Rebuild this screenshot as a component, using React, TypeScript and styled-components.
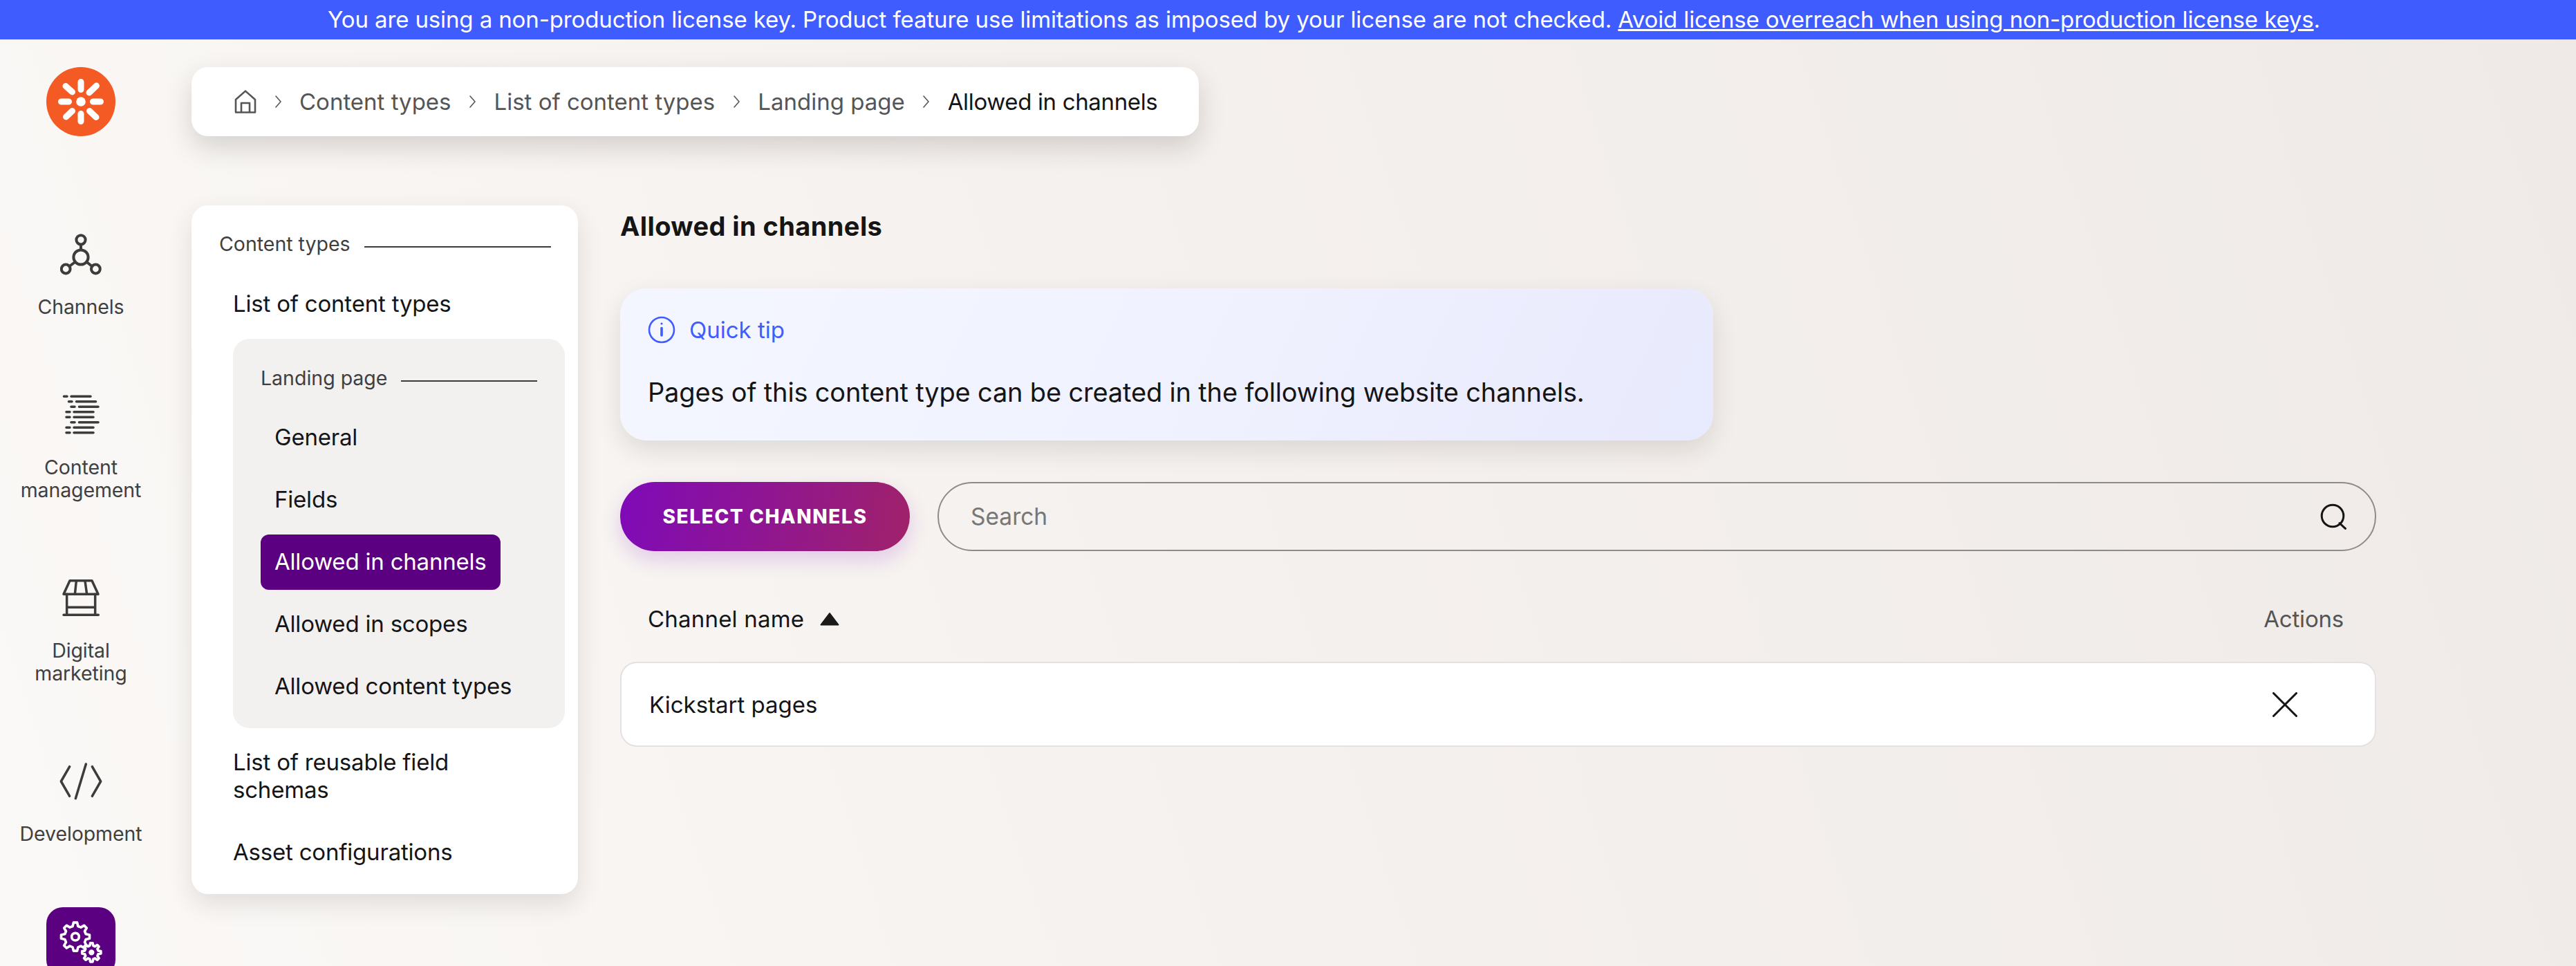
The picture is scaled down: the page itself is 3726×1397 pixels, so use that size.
import React from "react";
import styled, { createGlobalStyle } from "styled-components";

const GlobalStyle = createGlobalStyle`
  html, body {
    margin: 0;
    padding: 0;
  }
  body {
    font-family: Inter, "Liberation Sans", sans-serif;
    color: #151515;
  }
  * {
    box-sizing: border-box;
  }
`;

const Page = styled.div`
  width: 3726px;
  height: 1397px;
  overflow: hidden;
  display: flex;
  flex-direction: column;
  background: linear-gradient(72deg, #fbf9f7 0%, #f5f1ee 45%, #efeae7 100%);
`;

const Banner = styled.div`
  height: 57px;
  flex: none;
  padding-left: 104px;
  background: #3f5cff;
  color: #fff;
  font-size: 33px;
  letter-spacing: -0.12px;
  line-height: 57px;
  text-align: center;
  a {
    color: inherit;
    text-decoration: underline;
  }
`;

const Body = styled.div`
  flex: 1;
  display: flex;
`;

const Sidebar = styled.aside`
  width: 234px;
  flex: none;
  display: flex;
  flex-direction: column;
  align-items: center;
  padding-top: 40px;
  color: #404040;
`;

const Logo = styled.svg`
  width: 100px;
  height: 100px;
  flex: none;
  margin-bottom: 121px;
`;

const NavList = styled.nav`
  display: flex;
  flex-direction: column;
  align-items: center;
  gap: 90px;
`;

const NavItem = styled.div`
  display: flex;
  flex-direction: column;
  align-items: center;
`;

const NavIcon = styled.div<{ $active?: boolean }>`
  width: 100px;
  height: 100px;
  flex: none;
  display: flex;
  align-items: center;
  justify-content: center;
  border-radius: 24px;
  background: ${(p) => (p.$active ? "#5b0080" : "transparent")};
  color: ${(p) => (p.$active ? "#fff" : "#3c3c3c")};
`;

const NavLabel = styled.div`
  margin-top: 9px;
  font-size: 28.5px;
  letter-spacing: -0.1px;
  line-height: 33px;
  text-align: center;
  white-space: pre-line;
`;

const Content = styled.main`
  flex: 1;
  padding: 40px 0 0 43px;
  display: flex;
  flex-direction: column;
`;

const Breadcrumb = styled.div`
  align-self: flex-start;
  height: 100px;
  display: flex;
  align-items: center;
  gap: 26.5px;
  padding: 0 60px 0 62px;
  background: #fff;
  border-radius: 24px;
  box-shadow: 0 16px 38px rgba(40, 30, 25, 0.17);
  font-size: 33px;
  color: #555;
`;

const Current = styled.span`
  color: #151515;
  letter-spacing: -0.35px;
`;

const Columns = styled.div`
  margin-top: 100px;
  display: flex;
  align-items: flex-start;
  gap: 61px;
`;

const Menu = styled.div`
  width: 559px;
  flex: none;
  padding: 39px 19px 20px 40px;
  background: #fff;
  border-radius: 24px;
  box-shadow: 0 14px 36px rgba(40, 30, 25, 0.12);
`;

const GroupTitle = styled.div`
  display: flex;
  align-items: center;
  gap: 20px;
  margin: 0 20px 30px 0;
  font-size: 28.5px;
  line-height: 34px;
  color: #404040;
  &::after {
    content: "";
    flex: 1;
    height: 2px;
    margin-top: 8px;
    background: #3c3c3c;
  }
`;

const MenuItems = styled.div`
  display: flex;
  flex-direction: column;
  align-items: flex-start;
  gap: 10px;
`;

const MenuItem = styled.div<{ $active?: boolean }>`
  padding: 19px 20px 21px;
  font-size: 33px;
  letter-spacing: -0.2px;
  line-height: 40px;
  border-radius: 12px;
  color: ${(p) => (p.$active ? "#fff" : "#151515")};
  background: ${(p) => (p.$active ? "#5b0080" : "transparent")};
`;

const Nested = styled.div`
  width: 480px;
  margin-left: 20px;
  padding: 40px 40px 20px 40px;
  background: #f3f0f0;
  border-radius: 24px;
`;

const NestedTitle = styled(GroupTitle)`
  margin: 0 0 29px;
`;

const Panel = styled.section`
  width: 2540px;
  flex: none;
`;

const Heading = styled.h1`
  margin: 0;
  font-size: 38px;
  line-height: 60px;
  font-weight: 700;
  letter-spacing: 0.4px;
`;

const Tip = styled.div`
  width: 1581px;
  margin-top: 60px;
  height: 220px;
  padding: 40px;
  border-radius: 38px;
  background: linear-gradient(115deg, #f4f6ff 0%, #f0f2ff 50%, #e8eafd 100%);
  box-shadow: 0 14px 36px rgba(40, 30, 25, 0.12);
`;

const TipHead = styled.div`
  display: flex;
  align-items: center;
  gap: 20px;
  height: 40px;
  color: #3f5cff;
  font-size: 33px;
`;

const TipBody = styled.p`
  margin: 45px 0 0;
  font-size: 38px;
  line-height: 50px;
  letter-spacing: -0.17px;
`;

const Toolbar = styled.div`
  margin-top: 60px;
  display: flex;
  gap: 40px;
`;

const PrimaryButton = styled.button`
  width: 419px;
  height: 100px;
  flex: none;
  border: none;
  border-radius: 50px;
  color: #fff;
  font-family: inherit;
  font-size: 28px;
  font-weight: 800;
  letter-spacing: 1.6px;
  background: linear-gradient(100deg, #7f0ab8 0%, #a0226a 100%);
  box-shadow: 0 12px 30px rgba(130, 10, 190, 0.18);
`;

const SearchBox = styled.label`
  flex: 1;
  height: 100px;
  display: flex;
  align-items: center;
  padding: 0 41px 0 46px;
  border: 2px solid #8c8c8c;
  border-radius: 50px;
`;

const SearchInput = styled.input`
  flex: 1;
  border: none;
  outline: none;
  padding: 0;
  background: transparent;
  font-family: inherit;
  font-size: 33.5px;
  &::placeholder {
    color: #777;
    opacity: 1;
  }
`;

const TableHead = styled.div`
  margin-top: 78px;
  height: 40px;
  display: flex;
  align-items: center;
  justify-content: space-between;
  padding: 0 47px 0 40px;
  font-size: 33px;
`;

const SortColumn = styled.div`
  display: flex;
  align-items: center;
  gap: 23px;
  letter-spacing: 0.2px;
`;

const ActionsColumn = styled.div`
  color: #555;
  letter-spacing: -0.2px;
`;

const TableRow = styled.div`
  margin-top: 42px;
  height: 123px;
  display: flex;
  align-items: center;
  justify-content: space-between;
  padding: 0 112px 0 40px;
  background: #fff;
  border: 2px solid #e3e1e1;
  border-radius: 24px;
  font-size: 33px;
`;

const gearPath = (cx: number, cy: number, outer: number, inner: number, teeth: number) => {
  const points: string[] = [];
  const step = (Math.PI * 2) / teeth;
  for (let i = 0; i < teeth; i++) {
    const a = i * step - Math.PI / 2;
    const corners: [number, number][] = [
      [inner, a - step * 0.32],
      [outer, a - step * 0.16],
      [outer, a + step * 0.16],
      [inner, a + step * 0.32],
    ];
    corners.forEach(([r, t]) => {
      points.push(`${(cx + r * Math.cos(t)).toFixed(1)} ${(cy + r * Math.sin(t)).toFixed(1)}`);
    });
  }
  return `M${points.join("L")}Z`;
};

const KenticoLogo = () => (
  <Logo viewBox="0 0 100 100">
    <circle cx="50" cy="50" r="50" fill="#f35a24" />
    <circle cx="50" cy="50" r="6.8" fill="#fff" />
    <g stroke="#fff" strokeWidth="9" strokeLinecap="round">
      <path d="M50 21.5V32.5M50 67.5V78.5" />
      <path d="M21.5 50H32.5M67.5 50H78.5" />
      <path d="M28 27.5L37.5 36M72.5 27L62 37M28.5 72L37.5 63.5M72 72.5L62.5 63.5" />
    </g>
  </Logo>
);

const ChannelsIcon = () => (
  <svg width="60" height="60" viewBox="0 0 60 60" fill="none" stroke="currentColor" strokeWidth="4">
    <circle cx="30" cy="8.8" r="6.6" />
    <circle cx="30" cy="34" r="10.6" />
    <circle cx="8.2" cy="51" r="6.4" />
    <circle cx="51.4" cy="51" r="6.4" />
    <path d="M30 15.6V23M21.5 41L13.5 47M38.5 41L46 47" />
  </svg>
);

const contentRows: [number, number, number, number][] = [
  [92.5, 97, 103, 131],
  [99.5, 104, 110.5, 138.5],
  [103, 108, 114.5, 142],
  [96, 101, 107, 135],
  [96, 101, 107, 135],
  [103, 108, 114.5, 142],
  [96, 101, 107, 135],
  [96, 101, 107, 135],
];

const ContentIcon = () => (
  <svg width="54" height="60" viewBox="90 572 54 60" fill="none" stroke="currentColor" strokeWidth="3.6" strokeLinecap="round">
    {contentRows.map(([a, b, c, d], i) => (
      <path key={i} d={`M${a} ${575.3 + i * 7.5}H${b}M${c} ${575.3 + i * 7.5}H${d}`} />
    ))}
  </svg>
);

const StoreIcon = () => (
  <svg width="56" height="56" viewBox="267 891 168 168" fill="none" stroke="currentColor" strokeWidth="10.5" strokeLinecap="round" strokeLinejoin="round">
    <path d="M303 899H399L426 958H276Z" />
    <path d="M331 901L325 958M369 901L377 958" />
    <path d="M290 958V1048M413 958V1048M290 1015H413M276 1048H427" />
  </svg>
);

const CodeIcon = () => (
  <svg width="64" height="60" viewBox="255 120 192 180" fill="none" stroke="currentColor" strokeWidth="10.5" strokeLinecap="round" strokeLinejoin="round">
    <path d="M302 146L265 210L302 274" />
    <path d="M373 135L328 284" />
    <path d="M400 146L437 210L400 274" />
  </svg>
);

const SettingsIcon = () => (
  <svg width="64" height="64" viewBox="255 810 192 192" fill="none" stroke="currentColor" strokeWidth="11" strokeLinejoin="round">
    <path d={gearPath(327, 884, 62, 47, 8)} />
    <circle cx="327" cy="884" r="16" />
    <path d={gearPath(397, 952, 41, 30, 8)} />
    <circle cx="397" cy="952" r="7" fill="currentColor" />
  </svg>
);

const HomeIcon = () => (
  <svg width="32" height="34" viewBox="0 0 32 34" fill="none" stroke="#555" strokeWidth="2.6" strokeLinejoin="round">
    <path d="M2 32.5V14L16 1.6L30 14V32.5Z" />
    <path d="M10 32.5V19H22V32.5" />
  </svg>
);

const Chevron = () => (
  <svg width="9" height="18" viewBox="0 0 9 18" fill="none" stroke="#555" strokeWidth="1.6" strokeLinecap="round">
    <path d="M1 1L8 9L1 17" />
  </svg>
);

const InfoIcon = () => (
  <svg width="40" height="40" viewBox="0 0 40 40" fill="none" stroke="currentColor" strokeWidth="2.6" strokeLinecap="round">
    <circle cx="20" cy="20" r="18" />
    <path d="M20 17.5V28" strokeWidth="3.6" />
    <circle cx="20" cy="11" r="1.6" fill="currentColor" stroke="none" />
  </svg>
);

const SearchIcon = () => (
  <svg width="38" height="38" viewBox="0 0 38 38" fill="none" stroke="#151515" strokeWidth="3" strokeLinecap="round">
    <circle cx="18" cy="18" r="15.8" />
    <path d="M28 28.5L36.4 36.4" />
  </svg>
);

const SortArrow = () => (
  <svg width="28" height="20" viewBox="0 0 28 20" fill="#1a1a1a" stroke="#1a1a1a" strokeWidth="2" strokeLinejoin="round">
    <path d="M14 2L26.5 18.5H1.5Z" />
  </svg>
);

const CloseIcon = () => (
  <svg width="36" height="36" viewBox="0 0 36 36" fill="none" stroke="#151515" strokeWidth="3" strokeLinecap="round">
    <path d="M1.5 1.5L34.5 34.5M34.5 1.5L1.5 34.5" />
  </svg>
);

const navItems = [
  { label: "Channels", icon: <ChannelsIcon /> },
  { label: "Content\nmanagement", icon: <ContentIcon /> },
  { label: "Digital\nmarketing", icon: <StoreIcon /> },
  { label: "Development", icon: <CodeIcon /> },
];

const crumbs = ["Content types", "List of content types", "Landing page"];
const nestedItems = ["General", "Fields", "Allowed in channels", "Allowed in scopes", "Allowed content types"];

export default function App() {
  return (
    <Page>
      <GlobalStyle />
      <Banner>
        You are using a non-production license key. Product feature use limitations as imposed by your license are not
        checked. <a href="#license">Avoid license overreach when using non-production license keys</a>.
      </Banner>
      <Body>
        <Sidebar>
          <KenticoLogo />
          <NavList>
            {navItems.map((item) => (
              <NavItem key={item.label}>
                <NavIcon>{item.icon}</NavIcon>
                <NavLabel>{item.label}</NavLabel>
              </NavItem>
            ))}
            <NavItem>
              <NavIcon $active>
                <SettingsIcon />
              </NavIcon>
            </NavItem>
          </NavList>
        </Sidebar>
        <Content>
          <Breadcrumb>
            <HomeIcon />
            {crumbs.map((crumb) => (
              <React.Fragment key={crumb}>
                <Chevron />
                <span>{crumb}</span>
              </React.Fragment>
            ))}
            <Chevron />
            <Current>Allowed in channels</Current>
          </Breadcrumb>
          <Columns>
            <Menu>
              <GroupTitle>Content types</GroupTitle>
              <MenuItems>
                <MenuItem>List of content types</MenuItem>
                <Nested>
                  <NestedTitle>Landing page</NestedTitle>
                  <MenuItems>
                    {nestedItems.map((item) => (
                      <MenuItem key={item} $active={item === "Allowed in channels"}>
                        {item}
                      </MenuItem>
                    ))}
                  </MenuItems>
                </Nested>
                <MenuItem>
                  List of reusable field
                  <br />
                  schemas
                </MenuItem>
                <MenuItem>Asset configurations</MenuItem>
              </MenuItems>
            </Menu>
            <Panel>
              <Heading>Allowed in channels</Heading>
              <Tip>
                <TipHead>
                  <InfoIcon />
                  Quick tip
                </TipHead>
                <TipBody>Pages of this content type can be created in the following website channels.</TipBody>
              </Tip>
              <Toolbar>
                <PrimaryButton>SELECT CHANNELS</PrimaryButton>
                <SearchBox>
                  <SearchInput placeholder="Search" />
                  <SearchIcon />
                </SearchBox>
              </Toolbar>
              <TableHead>
                <SortColumn>
                  Channel name
                  <SortArrow />
                </SortColumn>
                <ActionsColumn>Actions</ActionsColumn>
              </TableHead>
              <TableRow>
                Kickstart pages
                <CloseIcon />
              </TableRow>
            </Panel>
          </Columns>
        </Content>
      </Body>
    </Page>
  );
}
